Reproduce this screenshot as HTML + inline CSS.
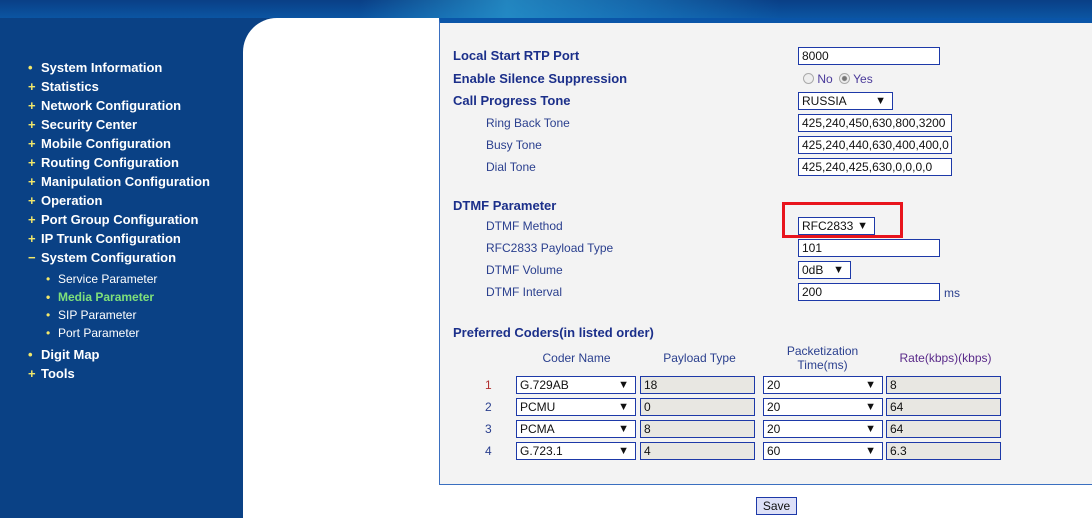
<!DOCTYPE html>
<html><head><style>
*{margin:0;padding:0;box-sizing:border-box}
body{width:1092px;height:518px;overflow:hidden;background:#fff;font-family:"Liberation Sans",Arial,sans-serif;position:relative}
.hdr{position:absolute;left:0;top:0;width:1092px;height:18px;background:linear-gradient(180deg,#0a3f86 0%,#0b55a2 100%)}
.hdr2{position:absolute;left:360px;top:0;width:420px;height:18px;background:linear-gradient(90deg,rgba(30,140,200,0) 0%,rgba(40,150,205,.8) 35%,rgba(30,130,195,.6) 65%,rgba(30,130,195,0) 100%)}
.side{position:absolute;left:0;top:18px;width:243px;height:500px;background:#0a4185}
.white{position:absolute;left:243px;top:18px;width:197px;height:500px;background:#fff;border-top-left-radius:34px}
.side2{position:absolute;left:243px;top:18px;width:40px;height:40px;background:#0a4185}
.panel{position:absolute;left:439px;top:18px;width:660px;height:467px;background:#f3f3f3;border-top:5px solid #0a55a8;border-left:1px solid #3a6fc0;border-bottom:1px solid #3a6fc0}
.m{position:absolute;color:#fff;font-weight:bold;font-size:13px;left:41px}
.m i{position:absolute;left:-13px;color:#f3e86a;font-style:normal;font-weight:bold}
.s{position:absolute;color:#fff;font-size:12px;left:58px}
.s i{position:absolute;left:-12px;color:#f3e86a;font-style:normal}
.t{position:absolute;font-size:13px;font-weight:bold;color:#1b2f8a}
.l{position:absolute;font-size:12px;color:#2a3f8e}
.in{position:absolute;height:18px;border:1px solid #1d39a8;background:#fff;font-size:12px;color:#111;padding-left:3px;line-height:16px;white-space:nowrap;overflow:hidden}
.g{background:#e8e7e2}
.sel:after{content:"▼";position:absolute;right:6px;top:1px;font-size:11px;line-height:14px}
.h{position:absolute;font-size:12px;color:#2a3f8e;text-align:center}
.n{position:absolute;font-size:12px;color:#2a3f8e;left:485px}
</style></head><body>
<div class="hdr"></div>
<div class="hdr2"></div>
<div class="side"></div>
<div class="side2"></div>
<div class="white"></div>
<div class="m" style="top:60px"><i>•</i>System Information</div>
<div class="m" style="top:79px"><i>+</i>Statistics</div>
<div class="m" style="top:98px"><i>+</i>Network Configuration</div>
<div class="m" style="top:117px"><i>+</i>Security Center</div>
<div class="m" style="top:136px"><i>+</i>Mobile Configuration</div>
<div class="m" style="top:155px"><i>+</i>Routing Configuration</div>
<div class="m" style="top:174px"><i>+</i>Manipulation Configuration</div>
<div class="m" style="top:193px"><i>+</i>Operation</div>
<div class="m" style="top:212px"><i>+</i>Port Group Configuration</div>
<div class="m" style="top:231px"><i>+</i>IP Trunk Configuration</div>
<div class="m" style="top:250px"><i>−</i>System Configuration</div>
<div class="s" style="top:272px"><i>•</i>Service Parameter</div>
<div class="s" style="top:290px;color:#7ee07a;font-weight:bold"><i>•</i>Media Parameter</div>
<div class="s" style="top:308px"><i>•</i>SIP Parameter</div>
<div class="s" style="top:326px"><i>•</i>Port Parameter</div>
<div class="m" style="top:347px"><i>•</i>Digit Map</div>
<div class="m" style="top:366px"><i>+</i>Tools</div>

<div class="panel"></div>
<div class="t" style="left:453px;top:48px">Local Start RTP Port</div>
<div class="t" style="left:453px;top:71px">Enable Silence Suppression</div>
<div class="t" style="left:453px;top:93px">Call Progress Tone</div>
<div class="l" style="left:486px;top:116px">Ring Back Tone</div>
<div class="l" style="left:486px;top:138px">Busy Tone</div>
<div class="l" style="left:486px;top:160px">Dial Tone</div>
<div class="in" style="left:798px;top:47px;width:142px">8000</div>
<div style="position:absolute;left:803px;top:72px;font-size:12px;color:#4a3a9a">
<span style="display:inline-block;width:11px;height:11px;border:1px solid #aaa;border-radius:50%;background:#eee;vertical-align:-1px"></span> No
<span style="display:inline-block;width:11px;height:11px;border:1px solid #aaa;border-radius:50%;background:radial-gradient(#777 2px,#eee 3px);vertical-align:-1px;margin-left:3px"></span> Yes</div>
<div class="in sel" style="left:798px;top:92px;width:95px">RUSSIA</div>
<div class="in" style="left:798px;top:114px;width:154px">425,240,450,630,800,3200</div>
<div class="in" style="left:798px;top:136px;width:154px">425,240,440,630,400,400,0</div>
<div class="in" style="left:798px;top:158px;width:154px">425,240,425,630,0,0,0,0</div>

<div class="t" style="left:453px;top:198px">DTMF Parameter</div>
<div class="l" style="left:486px;top:219px">DTMF Method</div>
<div class="l" style="left:486px;top:241px">RFC2833 Payload Type</div>
<div class="l" style="left:486px;top:263px">DTMF Volume</div>
<div class="l" style="left:486px;top:285px">DTMF Interval</div>
<div style="position:absolute;left:782px;top:202px;width:121px;height:36px;border:3px solid #e8141c"></div>
<div class="in sel" style="left:798px;top:217px;width:77px">RFC2833</div>
<div class="in" style="left:798px;top:239px;width:142px">101</div>
<div class="in sel" style="left:798px;top:261px;width:53px">0dB</div>
<div class="in" style="left:798px;top:283px;width:142px">200</div>
<div class="l" style="left:944px;top:286px">ms</div>

<div class="t" style="left:453px;top:325px">Preferred Coders(in listed order)</div>
<div class="h" style="left:517px;top:351px;width:119px">Coder Name</div>
<div class="h" style="left:640px;top:351px;width:119px">Payload Type</div>
<div class="h" style="left:762px;top:344px;width:121px;line-height:14px">Packetization<br>Time(ms)</div>
<div class="h" style="left:886px;top:351px;width:119px;color:#5a2a8a">Rate(kbps)(kbps)</div>

<div class="n" style="top:378px;color:#b03030">1</div>
<div class="n" style="top:400px">2</div>
<div class="n" style="top:422px">3</div>
<div class="n" style="top:444px">4</div>
<div class="in sel" style="left:516px;top:376px;width:120px">G.729AB</div>
<div class="in sel" style="left:516px;top:398px;width:120px">PCMU</div>
<div class="in sel" style="left:516px;top:420px;width:120px">PCMA</div>
<div class="in sel" style="left:516px;top:442px;width:120px">G.723.1</div>
<div class="in g" style="left:640px;top:376px;width:115px">18</div>
<div class="in g" style="left:640px;top:398px;width:115px">0</div>
<div class="in g" style="left:640px;top:420px;width:115px">8</div>
<div class="in g" style="left:640px;top:442px;width:115px">4</div>
<div class="in sel" style="left:763px;top:376px;width:120px">20</div>
<div class="in sel" style="left:763px;top:398px;width:120px">20</div>
<div class="in sel" style="left:763px;top:420px;width:120px">20</div>
<div class="in sel" style="left:763px;top:442px;width:120px">60</div>
<div class="in g" style="left:886px;top:376px;width:115px">8</div>
<div class="in g" style="left:886px;top:398px;width:115px">64</div>
<div class="in g" style="left:886px;top:420px;width:115px">64</div>
<div class="in g" style="left:886px;top:442px;width:115px">6.3</div>

<div style="position:absolute;left:756px;top:497px;width:41px;height:18px;border:1px solid #1d39a8;background:#dde0f8;font-size:12px;text-align:center;line-height:16px;color:#111">Save</div>
</body></html>
